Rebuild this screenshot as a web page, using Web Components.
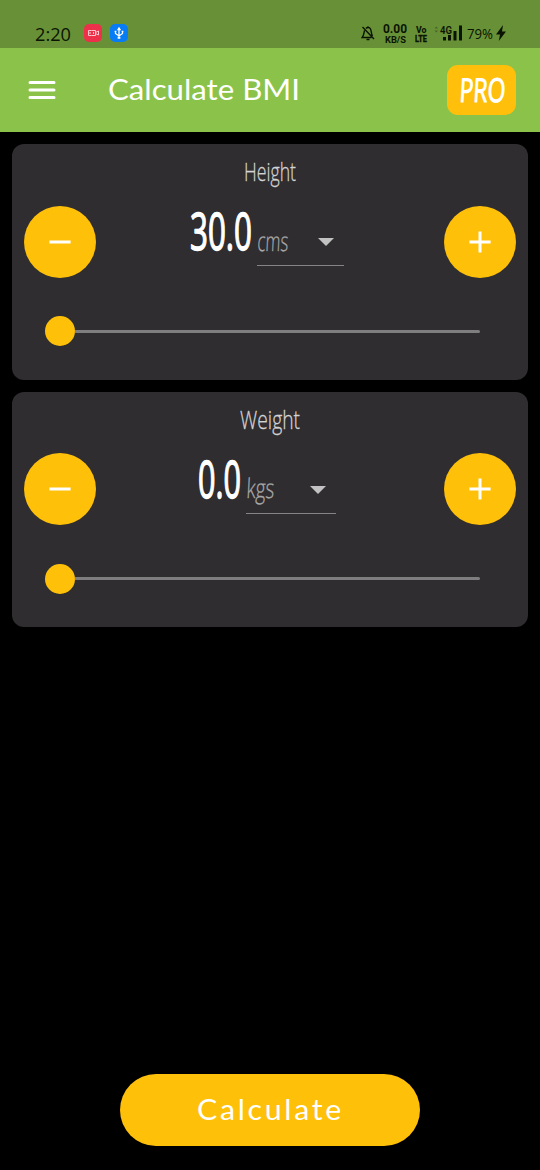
<!DOCTYPE html>
<html lang="en">
<head>
<meta charset="utf-8">
<title>Calculate BMI</title>
<style>
html,body{margin:0;height:100%;background:#000}
</style>
</head>
<body>
<bmi-app></bmi-app>
<script>
const define = (name, html) => customElements.define(name, class extends HTMLElement {
  connectedCallback() {
    if (this.shadowRoot) return;
    const root = this.attachShadow({mode: 'open'});
    const t = document.createElement('template');
    t.innerHTML = typeof html === 'function' ? html(this) : html;
    root.append(t.content.cloneNode(true));
  }
});
const a = (el, n, d = '') => el.getAttribute(n) ?? d;

// A line of text fitted to a width; the box spans cap height to baseline.
define('fit-text', el => `
<style>
:host{display:block;flex:none;width:${a(el,'w')}px;height:${a(el,'h')}px}
svg{display:block;overflow:visible}
text{font-family:${a(el,'face','"Open Sans"')},"Noto Sans",sans-serif;font-size:${a(el,'size')}px;font-weight:${a(el,'weight','400')};fill:currentColor;stroke:currentColor;stroke-width:${a(el,'ink','0')};stroke-linejoin:round;letter-spacing:${a(el,'track','0')}px}
</style>
<svg width="${a(el,'w')}" height="${a(el,'h')}"><text x="0" y="${a(el,'h')}" ${el.hasAttribute('slant') ? `transform="translate(${a(el,'h')*0.05} 0) skewX(-3)"` : ''} textLength="${a(el,'w')}" lengthAdjust="spacingAndGlyphs">${a(el,'text')}</text></svg>`);

define('status-bar', `
<style>
:host{display:flex;height:48px;box-sizing:border-box;background:#689137;color:#0b1402;padding:24px 34px 0 35px;align-items:flex-start}
.time{margin-top:3px}
.chip{width:18px;height:18px;border-radius:5px;display:block}
.rec{background:#ee314b;margin-left:13px}.usb{background:#087cf5;margin-left:8px}
.right{margin-left:auto;display:flex;align-items:flex-start}
.col{display:flex;flex-direction:column;align-items:center}
svg{display:block;flex:none}
</style>
<fit-text class="time" text="2:20" w="36" h="13.500" size="18.5"></fit-text>
<svg class="chip rec" viewBox="0 0 18 18" fill="none" stroke="#ffc5cc" stroke-width="1"><path d="M7.500 6.500h-3v5h3M4.500 9h2.500M7.500 6.500h4v5h-4M9.500 8v2M11.500 8.500l3-1.500v4l-3-1.500"/></svg>
<svg class="chip usb" viewBox="0 0 18 18" fill="none" stroke="#fff" stroke-width="1.3"><path d="M9 4v10M5.500 7v2.500L9 12l3.500-2.500V7"/><path d="M8 5.500 9 4l1 1.500zM8.300 13.300h1.400v.7H8.300z" fill="#fff"/><path d="M4.700 7.300h1.600M11.700 7.300h1.600"/></svg>
<div class="right">
<svg width="14" height="18" viewBox="0 0 14 18" fill="none" stroke="currentColor" stroke-width="1.4" style="margin-right:8px"><path d="M3.500 6.500C3 9 3 11 1.200 13.500h9.300M5 4.500C6 3 8.500 3 9.500 5c1 2 .5 4.500 2 7M1.500 3l11.500 12M5.500 15.500h3M7 3.500V2.300"/></svg>
<div class="col" style="margin-right:8px">
<fit-text text="0.00" w="24" h="9" size="12" weight="700" face="Roboto"></fit-text>
<fit-text style="margin-top:2.500px" text="KB/S" w="21" h="6.500" size="8.500" weight="700" face="Roboto"></fit-text></div>
<div class="col" style="margin:2px 7px 0 0">
<fit-text text="Vo" w="10.500" h="7" size="9.500" weight="800" face="Roboto"></fit-text>
<fit-text style="margin-top:1.500px" text="LTE" w="12" h="7" size="8.500" weight="800" face="Roboto" ink=".3"></fit-text></div>
<svg width="29" height="18" viewBox="0 0 29 18" fill="currentColor" style="margin-right:4px"><path d="M.5 4.500l1.800-2 1.800 2zM.5 6.500h3.600l-1.800 2z" opacity=".35"/><path d="M9 13h3v3.500H9zM14 11h3v5.500h-3zM19.500 7h3v9.500h-3zM25 1.500h3v15h-3z"/><text x="6" y="9.500" font-family="Roboto,sans-serif" font-size="10" font-weight="600" textLength="12" lengthAdjust="spacingAndGlyphs">4G</text></svg>
<fit-text style="margin:4px 3px 0 0" text="79%" w="26" h="10.500" size="14.500"></fit-text>
<svg width="10" height="18" viewBox="0 0 10 18" fill="currentColor"><path d="M7 1 0 10.500h4L2.800 17 10 7.500H6z"/></svg>
</div>`);

define('app-bar', `
<style>
:host{display:flex;height:84px;background:#8bc34a;color:#fff;align-items:center;box-sizing:border-box;padding:0 24px 0 28px}
.pro{margin-left:auto;width:69px;height:50px;border-radius:11px;background:#ffbf0b;display:flex;align-items:center;justify-content:center}
.title{margin:-1px 0 0 52px}
svg{display:block}
</style>
<svg width="28" height="20" stroke="#fff" stroke-width="3" stroke-linecap="round"><path d="M2 2.500h24M2 10h24M2 17.500h24"/></svg>
<fit-text class="title" text="Calculate BMI" w="192" h="20.500" size="28" face="Lato"></fit-text>
<div class="pro"><fit-text slant text="PRO" w="46" h="24" size="33" weight="400" ink="1"></fit-text></div>`);

define('round-button', el => `
<style>
:host{display:flex;width:72px;height:72px;border-radius:50%;background:#ffc00a;align-items:center;justify-content:center;flex:none}
</style>
<svg width="22" height="22" stroke="#fff" stroke-width="3"><path d="M.4 11h21.200${a(el,'kind') === 'plus' ? 'M11 .4v21.200' : ''}"/></svg>`);

define('value-slider', `
<style>
:host{display:flex;align-items:center;height:30px}
i{width:30px;height:30px;border-radius:50%;background:#ffc00a}
b{flex:1;height:3px;background:#7f7e7f;border-radius:0 2px 2px 0}
</style><i></i><b></b>`);

define('unit-select', el => `
<style>
:host{display:flex;box-sizing:border-box;width:${a(el,'w')}px;height:54px;border-bottom:1px solid #858485;color:#a9a8a9;align-items:flex-start;justify-content:space-between;padding-right:10px}
svg{margin-top:26px;display:block}
fit-text{margin-top:19.500px}
</style>
<fit-text slant text="${a(el,'unit')}" w="${a(el,'tw')}" h="19" size="27" weight="300" ink=".3"></fit-text>
<svg width="16" height="8" fill="#c3c2c3"><path d="M0 0h16L8 8z"/></svg>`);

define('measure-card', el => `
<style>
:host{display:block;height:235.500px;box-sizing:border-box;border-radius:12px;background:#2f2d2f;padding:18px 12px 0;color:#d4d3d4}
.label{margin:0 auto}
.row{display:flex;justify-content:space-between;margin-top:25px;height:72px}
.value{display:flex;color:#fff;align-items:flex-start;margin:-.5px 7px 0 0}
.num{margin-top:7px}
value-slider{margin:38.500px 36px 0 21px}
</style>
<fit-text class="label" text="${a(el,'label')}" w="${a(el,'lw')}" h="18.500" size="26" weight="300" ink=".3"></fit-text>
<div class="row"><round-button kind="minus"></round-button>
<div class="value"><fit-text class="num" text="${a(el,'value')}" w="${a(el,'vw')}" h="38" size="52" weight="400" ink="1.400"></fit-text><slot></slot></div>
<round-button kind="plus"></round-button></div>
<value-slider></value-slider>`);

define('primary-button', `
<style>
:host{display:flex;width:300px;height:72px;border-radius:36px;background:#ffc00a;color:#fff;align-items:center;justify-content:center}
fit-text{margin-top:-1px}
</style><fit-text text="Calculate" w="147" h="21" size="28" track="2.500" face="Lato"></fit-text>`);

define('bmi-app', `
<style>
:host{display:flex;flex-direction:column;width:540px;height:1170px;background:#000;overflow:hidden}
main{flex:1;display:flex;flex-direction:column;gap:12px;padding:12px}
unit-select{margin:7px 0 0 5px}
primary-button{margin:0 auto 24px}
</style>
<status-bar></status-bar><app-bar></app-bar>
<main>
<measure-card label="Height" lw="52" value="30.0" vw="62"><unit-select unit="cms" w="87" tw="31"></unit-select></measure-card>
<measure-card label="Weight" lw="60" value="0.0" vw="43"><unit-select unit="kgs" w="90" tw="28"></unit-select></measure-card>
</main>
<primary-button></primary-button>`);
</script>
</body>
</html>
